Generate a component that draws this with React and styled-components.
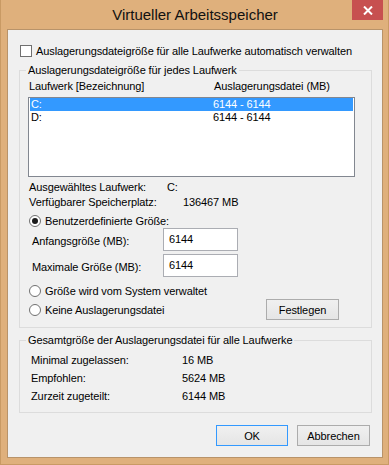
import React from 'react'
import styled, { createGlobalStyle } from 'styled-components'

const GlobalStyle = createGlobalStyle`
	html, body {
		margin: 0;
		padding: 0;
		background: #fff;
	}
	body {
		font-family: "Liberation Sans", Arial, sans-serif;
		font-size: 11px;
		letter-spacing: -0.1px;
		color: #000;
	}
`

const Frame = styled.div`
	box-sizing: border-box;
	width: 389px;
	height: 465px;
	background: #dfb07c;
	border: 1px solid #c99a64;
	border-top: none;
	padding: 0 5px 6px 6px;
	display: flex;
	flex-direction: column;
`

const TitleBar = styled.div`
	height: 29px;
	flex: none;
	display: grid;
	grid-template-columns: 1fr auto 1fr;
	align-items: start;
`

const Title = styled.div`
	grid-column: 2;
	font-size: 15px;
	letter-spacing: 0;
	line-height: 29px;
	color: #111;
`

const CloseButton = styled.div`
	grid-column: 3;
	justify-self: end;
	width: 31px;
	height: 20px;
	background: #c75050;
	display: flex;
	align-items: center;
	justify-content: center;
`

const Client = styled.div`
	flex: 1;
	background: #f0f0f0;
	border: 1px solid #b8936a;
	padding: 14px 10px 0 11px;
	display: flex;
	flex-direction: column;
`

const CheckRow = styled.div`
	display: flex;
	align-items: center;
	height: 13px;
	padding-left: 1px;
`

const CheckBox = styled.div`
	box-sizing: border-box;
	width: 12px;
	height: 12px;
	border: 1px solid #707070;
	background: #fff;
	margin-right: 4px;
`

const Group = styled.div`
	border: 1px solid #dcdcdc;
	margin-top: ${p => p.$mt}px;
	padding-bottom: 7px;
`

const Caption = styled.div`
	display: table;
	margin: -8px 0 0 6px;
	padding: 0 2px;
	background: #f0f0f0;
	line-height: 15px;
`

const Header = styled.div`
	display: flex;
	margin-top: 1px;
	padding-left: 9px;
	line-height: 15px;
`

const Col = styled.div`
	width: ${p => p.$w}px;
	flex: none;
`

const ListBox = styled.div`
	box-sizing: border-box;
	width: 327px;
	height: 80px;
	margin: 3px 0 0 8px;
	border: 1px solid #828790;
	background: #fff;
	padding: 0 1px;
`

const ListRow = styled.div`
	display: flex;
	height: 13px;
	line-height: 13px;
	padding-left: 1px;
	background: ${p => (p.$selected ? '#3399ff' : 'transparent')};
	color: ${p => (p.$selected ? '#fff' : '#000')};
`

const InfoRow = styled.div`
	display: flex;
	padding-left: ${p => p.$pad}px;
	line-height: ${p => p.$lh}px;
	margin-top: ${p => p.$mt || 0}px;
`

const RadioRow = styled.div`
	display: flex;
	align-items: center;
	height: ${p => p.$h}px;
	margin-top: ${p => p.$mt}px;
	padding-left: 9px;
	padding-right: 32px;
`

const RadioCircle = styled.div`
	box-sizing: border-box;
	width: 12px;
	height: 12px;
	border-radius: 50%;
	border: 1px solid #707070;
	background: #fff;
	margin-right: 4px;
	display: flex;
	align-items: center;
	justify-content: center;
	&::after {
		content: '';
		display: ${p => (p.$checked ? 'block' : 'none')};
		width: 6px;
		height: 6px;
		border-radius: 50%;
		background: #1a1a1a;
	}
`

const FieldRow = styled.div`
	display: flex;
	align-items: center;
	margin-top: ${p => p.$mt}px;
	padding-left: 12px;
`

const FieldLabel = styled.div`
	width: 131px;
	flex: none;
	padding-top: 2px;
`

const TextBox = styled.div`
	box-sizing: border-box;
	width: 75px;
	height: 23px;
	border: 1px solid #abadb3;
	background: #fff;
	padding: 0 0 2px 5px;
	display: flex;
	align-items: center;
`

const Button = styled.div`
	box-sizing: border-box;
	width: ${p => p.$w}px;
	height: 21px;
	border: 1px solid ${p => (p.$default ? '#3399ff' : '#acacac')};
	background: linear-gradient(#f0f0f0, #e5e5e5);
	display: flex;
	align-items: center;
	justify-content: center;
	margin-left: ${p => (p.$auto ? 'auto' : '0')};
`

const ButtonBar = styled.div`
	display: flex;
	justify-content: flex-end;
	gap: 9px;
	margin-top: 12px;
	padding-right: 2px;
`

const drives = [
	{ name: 'C:', size: '6144 - 6144', selected: true },
	{ name: 'D:', size: '6144 - 6144' },
]

const totals = [
	['Minimal zugelassen:', '16 MB'],
	['Empfohlen:', '5624 MB'],
	['Zurzeit zugeteilt:', '6144 MB'],
]

export default function App() {
	return (
		<>
			<GlobalStyle />
			<Frame>
				<TitleBar>
					<Title>Virtueller Arbeitsspeicher</Title>
					<CloseButton>
						<svg width="10" height="9" viewBox="0 0 10 9">
							<path d="M1 0.5 L9 8.5 M9 0.5 L1 8.5" stroke="#fff" strokeWidth="2" />
						</svg>
					</CloseButton>
				</TitleBar>
				<Client>
					<CheckRow>
						<CheckBox />
						<span>Auslagerungsdateigröße für alle Laufwerke automatisch verwalten</span>
					</CheckRow>

					<Group $mt={13}>
						<Caption>Auslagerungsdateigröße für jedes Laufwerk</Caption>
						<Header>
							<Col $w={185}>Laufwerk [Bezeichnung]</Col>
							<Col>Auslagerungsdatei (MB)</Col>
						</Header>
						<ListBox>
							{drives.map(d => (
								<ListRow key={d.name} $selected={d.selected}>
									<Col $w={182}>{d.name}</Col>
									<Col>{d.size}</Col>
								</ListRow>
							))}
						</ListBox>
						<InfoRow $pad={9} $lh={15} $mt={3}>
							<Col $w={138}>Ausgewähltes Laufwerk:</Col>
							<Col>C:</Col>
						</InfoRow>
						<InfoRow $pad={9} $lh={15}>
							<Col $w={154}>Verfügbarer Speicherplatz:</Col>
							<Col>136467 MB</Col>
						</InfoRow>
						<RadioRow $h={13} $mt={4}>
							<RadioCircle $checked />
							<span>Benutzerdefinierte Größe:</span>
						</RadioRow>
						<FieldRow $mt={1}>
							<FieldLabel>Anfangsgröße (MB):</FieldLabel>
							<TextBox>6144</TextBox>
						</FieldRow>
						<FieldRow $mt={3}>
							<FieldLabel>Maximale Größe (MB):</FieldLabel>
							<TextBox>6144</TextBox>
						</FieldRow>
						<RadioRow $h={13} $mt={7}>
							<RadioCircle />
							<span>Größe wird vom System verwaltet</span>
						</RadioRow>
						<RadioRow $h={21} $mt={2}>
							<RadioCircle />
							<span>Keine Auslagerungsdatei</span>
							<Button $w={73} $auto>Festlegen</Button>
						</RadioRow>
					</Group>

					<Group $mt={12}>
						<Caption>Gesamtgröße der Auslagerungsdatei für alle Laufwerke</Caption>
						{totals.map(([label, value], i) => (
							<InfoRow key={label} $pad={11} $lh={18} $mt={i === 0 ? 3 : 0}>
								<Col $w={151}>{label}</Col>
								<Col>{value}</Col>
							</InfoRow>
						))}
					</Group>

					<ButtonBar>
						<Button $w={72} $default>OK</Button>
						<Button $w={73}>Abbrechen</Button>
					</ButtonBar>
				</Client>
			</Frame>
		</>
	)
}
